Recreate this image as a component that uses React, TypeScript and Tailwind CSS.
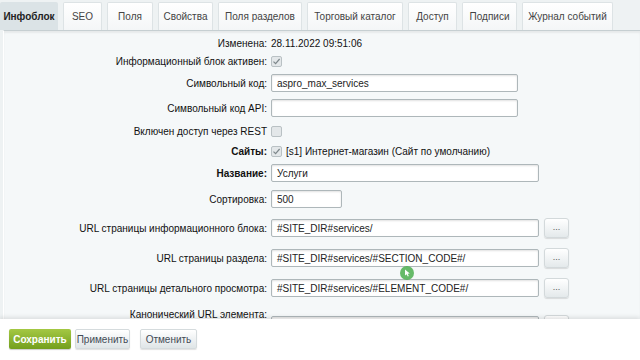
import React from "react";

const tabs = [
  { t: "Инфоблок", w: 58, active: true },
  { t: "SEO", w: 39 },
  { t: "Поля", w: 46 },
  { t: "Свойства", w: 55 },
  { t: "Поля разделов", w: 84 },
  { t: "Торговый каталог", w: 96 },
  { t: "Доступ", w: 49 },
  { t: "Подписи", w: 55 },
  { t: "Журнал событий", w: 91 },
];

function Check({ on }: { on?: boolean }) {
  return (
    <div className="w-[11px] h-[11px] rounded-[2px] border border-[#b9c1c4] bg-[#e3e7e9] flex items-center justify-center">
      {on && (
        <svg width="9" height="9" viewBox="0 0 9 9">
          <path d="M1.5 4.6 L3.6 6.6 L7.6 2" stroke="#7d878b" strokeWidth="1.2" fill="none" />
        </svg>
      )}
    </div>
  );
}

function Field({ w, v }: { w: number; v?: string }) {
  return (
    <div
      className="h-[18px] bg-white border border-[#aeb7ba] rounded-[2px] shadow-[inset_0_1px_2px_rgba(0,0,0,0.12)] pl-[5px] flex items-center text-[10px] text-[#222] whitespace-nowrap overflow-hidden"
      style={{ width: w }}
    >
      {v}
    </div>
  );
}

function Dots({ empty }: { empty?: boolean }) {
  return (
    <div className="ml-[5px] w-[25px] h-[20px] rounded-[3px] border border-[#d3d9db] bg-gradient-to-b from-[#ffffff] to-[#e4e9eb] shadow-[0_1px_1px_rgba(0,0,0,0.12)] flex items-center justify-center text-[9px] text-[#555] leading-none pb-[2px]">
      {empty ? "" : "..."}
    </div>
  );
}

function Row({
  h,
  label,
  bold,
  children,
}: {
  h: number;
  label: string;
  bold?: boolean;
  children?: React.ReactNode;
}) {
  return (
    <div className="flex items-center" style={{ height: h }}>
      <div className={`w-[263px] shrink-0 text-right text-[10px] text-[#111] ${bold ? "font-bold" : ""}`}>
        {label}
      </div>
      <div className="pl-[4px] flex items-center gap-[4px] text-[10px] text-[#111]">{children}</div>
    </div>
  );
}

export default function App() {
  return (
    <div className="relative w-[640px] h-[360px] overflow-hidden bg-[#eef2f3] flex flex-col font-['Liberation_Sans',Arial,sans-serif]">
      {/* tabs */}
      <div className="h-[30px] shrink-0 flex items-end gap-[5px] pt-[2px]">
        {tabs.map((t) => (
          <div
            key={t.t}
            className={`h-[28px] flex items-center justify-center text-[10px] rounded-t-[2px] ${
              t.active
                ? "bg-[#dbe3e6] text-[#222] font-bold"
                : "bg-gradient-to-b from-[#ffffff] to-[#f4f6f7] border border-b-0 border-[#dde3e5] text-[#444]"
            }`}
            style={{ width: t.w }}
          >
            {t.t}
          </div>
        ))}
      </div>
      {/* content */}
      <div className="flex-1 border-t border-[#c6cfd2] shadow-[inset_0_2px_2px_rgba(0,0,0,0.06)] ml-[3px] border-l border-l-white bg-[#f5f8f9] pt-[3px] overflow-hidden">
        <Row h={18} label="Изменена:">28.11.2022 09:51:06</Row>
        <Row h={18} label="Информационный блок активен:">
          <Check on />
        </Row>
        <Row h={26} label="Символьный код:">
          <Field w={247} v="aspro_max_services" />
        </Row>
        <Row h={24} label="Символьный код API:">
          <Field w={247} />
        </Row>
        <Row h={22} label="Включен доступ через REST">
          <Check />
        </Row>
        <Row h={18} label="Сайты:" bold>
          <Check on />
          <span>[s1] Интернет-магазин (Сайт по умолчанию)</span>
        </Row>
        <Row h={26} label="Название:" bold>
          <Field w={268} v="Услуги" />
        </Row>
        <Row h={26} label="Сортировка:">
          <Field w={71} v="500" />
        </Row>
        <Row h={32} label="URL страницы информационного блока:">
          <div className="flex items-center">
            <Field w={268} v="#SITE_DIR#services/" />
            <Dots />
          </div>
        </Row>
        <Row h={28} label="URL страницы раздела:">
          <div className="flex items-center">
            <Field w={268} v="#SITE_DIR#services/#SECTION_CODE#/" />
            <Dots />
          </div>
        </Row>
        <Row h={32} label="URL страницы детального просмотра:">
          <div className="flex items-center">
            <Field w={268} v="#SITE_DIR#services/#ELEMENT_CODE#/" />
            <Dots />
          </div>
        </Row>
        <div className="flex items-start h-[30px] pt-[3px]">
          <div className="w-[263px] shrink-0 text-right text-[10px] text-[#111]">Канонический URL элемента:</div>
          <div className="pl-[4px] pt-[8px] flex items-center">
            <Field w={268} />
            <Dots empty />
          </div>
        </div>
      </div>
      {/* footer */}
      <div className="h-[41px] shrink-0 bg-white shadow-[0_-2px_4px_rgba(0,0,0,0.10)] relative z-10 flex items-center pl-[9px] pb-[1px]">
        <div className="h-[20px] w-[62px] rounded-[2px] bg-gradient-to-b from-[#a4c843] to-[#739f1c] shadow-[0_1px_1px_rgba(0,0,0,0.2)] flex items-center justify-center text-[10px] text-white font-bold">
          Сохранить
        </div>
        <div className="ml-[4px] h-[20px] w-[55px] rounded-[2px] bg-gradient-to-b from-[#ffffff] to-[#dfe5e7] border border-[#d5dbdd] shadow-[0_1px_1px_rgba(0,0,0,0.12)] flex items-center justify-center text-[10px] text-[#434b55]">
          Применить
        </div>
        <div className="ml-[10px] h-[20px] w-[57px] rounded-[2px] bg-gradient-to-b from-[#ffffff] to-[#dfe5e7] border border-[#d5dbdd] shadow-[0_1px_1px_rgba(0,0,0,0.12)] flex items-center justify-center text-[10px] text-[#434b55]">
          Отменить
        </div>
      </div>
      {/* cursor highlight */}
      <div className="absolute left-[400px] top-[266px] w-[14px] h-[14px] rounded-full bg-[#4caf50]/85 flex items-center justify-center">
        <svg width="7" height="8" viewBox="0 0 7 8">
          <path d="M1 0.5 L1 6.5 L2.6 5.2 L3.8 7.5 L4.8 7 L3.7 4.8 L5.8 4.6 Z" fill="white" />
        </svg>
      </div>
    </div>
  );
}
